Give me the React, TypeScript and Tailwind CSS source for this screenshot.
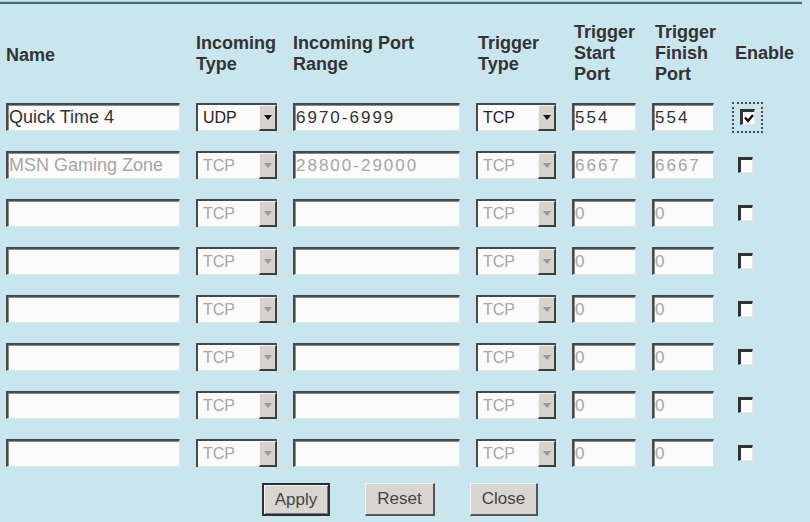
import React from "react";

type Row = {
  name: string;
  inType: string;
  range: string;
  trigType: string;
  start: string;
  finish: string;
  enabled: boolean;
  active: boolean;
};

const rows: Row[] = [
  { name: "Quick Time 4", inType: "UDP", range: "6970-6999", trigType: "TCP", start: "554", finish: "554", enabled: true, active: true },
  { name: "MSN Gaming Zone", inType: "TCP", range: "28800-29000", trigType: "TCP", start: "6667", finish: "6667", enabled: false, active: false },
  ...Array.from({ length: 6 }, () => ({ name: "", inType: "TCP", range: "", trigType: "TCP", start: "0", finish: "0", enabled: false, active: false })),
];

const cols = "grid grid-cols-[174px_81px_167px_80px_64px_62px_1fr] gap-x-4 pl-[6px]";

function Field({ value, active, numeric }: { value: string; active: boolean; numeric?: boolean }) {
  return (
    <div
      className={
        "h-[28px] bg-[#fbfbfb] border-t-2 border-l-2 border-t-[#4a4a4a] border-l-[#4a4a4a] border-b border-r border-b-[#e2e2e2] border-r-[#e2e2e2] shadow-[inset_1px_1px_0_#8a8a8a] flex items-center pl-[1px] overflow-hidden whitespace-nowrap " +
        (numeric ? "text-[17px] tracking-[2px] " : "text-[18px] ") +
        (active ? "text-[#333]" : "text-[#a6a6a6]")
      }
    >
      {value}
    </div>
  );
}

function Select({ value, active }: { value: string; active: boolean }) {
  return (
    <div className="h-[28px] flex bg-[#fbfbfb] border-t-2 border-l-2 border-t-[#4a4a4a] border-l-[#4a4a4a]">
      <div
        className={
          "flex-1 flex items-center pl-[5px] text-[16px] border-b border-b-[#e2e2e2] " +
          (active ? "text-[#222]" : "text-[#a6a6a6]")
        }
      >
        {value}
      </div>
      <div className="w-[18px] bg-[#d6d2cc] border-t border-l border-t-[#f4f4f4] border-l-[#f4f4f4] border-r-2 border-b-2 border-r-[#3e3e3e] border-b-[#3e3e3e] flex items-center justify-center">
        <svg width="8" height="5" viewBox="0 0 8 5">
          <path d="M0 0 H8 L4 5 Z" fill={active ? "#111" : "#9a9a9a"} />
        </svg>
      </div>
    </div>
  );
}

function Check({ checked }: { checked: boolean }) {
  return (
    <div className="w-[15px] h-[16px] bg-[#fbfbfb] border-t-[3px] border-l-[3px] border-t-[#333] border-l-[#333] border-b border-r border-b-[#e6e6e6] border-r-[#e6e6e6] flex items-center justify-center">
      {checked && (
        <svg width="10" height="9" viewBox="0 0 10 9">
          <path d="M1 3.5 L4 7 L9 1" stroke="#111" strokeWidth="2.4" fill="none" />
        </svg>
      )}
    </div>
  );
}

function Button({ label, primary, width }: { label: string; primary?: boolean; width: string }) {
  return (
    <div
      className={
        width +
        " h-[33px] bg-[#d9d5d1] flex items-center justify-center text-[17px] text-[#444] " +
        (primary
          ? "border-2 border-[#2e2e2e] shadow-[inset_1px_1px_0_#f2f2f2,inset_-1px_-1px_0_#7a7a7a]"
          : "border-t border-l border-t-[#f2f2f2] border-l-[#f2f2f2] border-r-2 border-b-2 border-r-[#555] border-b-[#555]")
      }
    >
      {label}
    </div>
  );
}

export default function App() {
  const head = "flex items-center h-[63px] text-[18px] leading-[21px] font-bold text-[#333]";
  return (
    <div className="w-[810px] h-[522px] overflow-hidden bg-[#c9e6ee] font-['Liberation_Sans',Arial,sans-serif]">
      <div className="h-[1px] w-[802px] bg-[#a8d0dc] mt-[1px]" />
      <div className="h-[2px] w-[802px] bg-[#3f6e79]" />

      <div className={cols + " mt-[18px]"}>
        <div className={head + " pt-[3px]"}>Name</div>
        <div className={head}>
          <span>Incoming<br />Type</span>
        </div>
        <div className={head}>
          <span>Incoming Port<br />Range</span>
        </div>
        <div className={head + " pl-[2px]"}>
          <span>Trigger<br />Type</span>
        </div>
        <div className={head + " pl-[2px]"}>
          <span>Trigger<br />Start<br />Port</span>
        </div>
        <div className={head + " pl-[3px]"}>
          <span>Trigger<br />Finish<br />Port</span>
        </div>
        <div className={head + " pl-[5px]"}>Enable</div>
      </div>

      <div className={cols + " gap-y-5 mt-[18px]"}>
        {rows.map((r, i) => (
          <React.Fragment key={i}>
            <Field value={r.name} active={r.active} />
            <Select value={r.inType} active={r.active} />
            <Field value={r.range} active={r.active} numeric />
            <Select value={r.trigType} active={r.active} />
            <Field value={r.start} active={r.active} numeric />
            <Field value={r.finish} active={r.active} numeric />
            <div className="h-[28px] flex items-center">
              {r.enabled ? (
                <div className="ml-[2px] w-[31px] h-[31px] shrink-0 border-2 border-dotted border-[#4a4a4a] flex items-center justify-center">
                  <Check checked />
                </div>
              ) : (
                <div className="ml-[8px]">
                  <Check checked={false} />
                </div>
              )}
            </div>
          </React.Fragment>
        ))}
      </div>

      <div className="flex gap-[35px] pl-[262px] mt-[16px]">
        <Button label="Apply" primary width="w-[68px]" />
        <Button label="Reset" width="w-[70px]" />
        <Button label="Close" width="w-[68px]" />
      </div>
    </div>
  );
}
